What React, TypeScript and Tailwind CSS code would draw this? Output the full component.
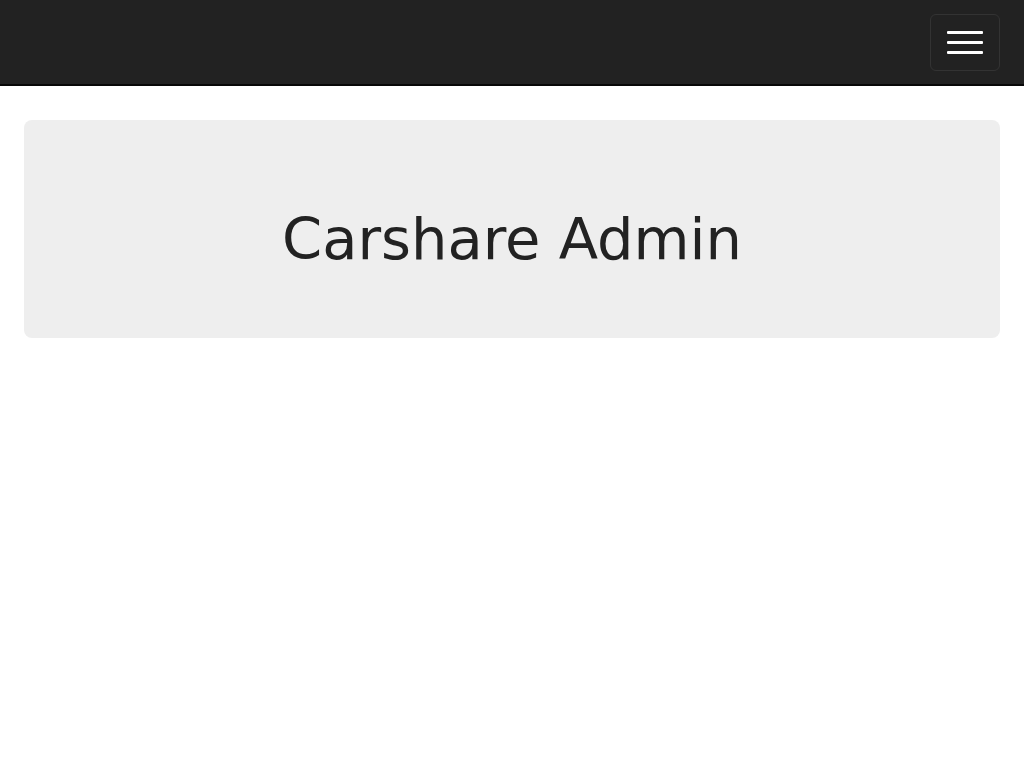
export default function App() {
  return (
    <div className="min-h-[768px] bg-white" style={{ fontFamily: '"DejaVu Sans", sans-serif' }}>
      <nav className="h-[86px] bg-[#222222] border-b-2 border-[#080808] flex justify-end items-start">
        <button className="mt-[14px] mr-[24px] w-[70px] h-[57px] rounded-[6px] border border-[#333333] flex flex-col items-center justify-center gap-[7px]">
          <span className="block w-[36px] h-[3px] bg-white rounded-[1px]" />
          <span className="block w-[36px] h-[3px] bg-white rounded-[1px]" />
          <span className="block w-[36px] h-[3px] bg-white rounded-[1px]" />
        </button>
      </nav>
      <div className="px-[24px] pt-[34px]">
        <div className="bg-[#eeeeee] rounded-[8px] h-[218px] pt-[91px] flex justify-center">
          <h1 className="text-[57.5px] text-[#222222] leading-none">Carshare Admin</h1>
        </div>
      </div>
    </div>
  );
}
